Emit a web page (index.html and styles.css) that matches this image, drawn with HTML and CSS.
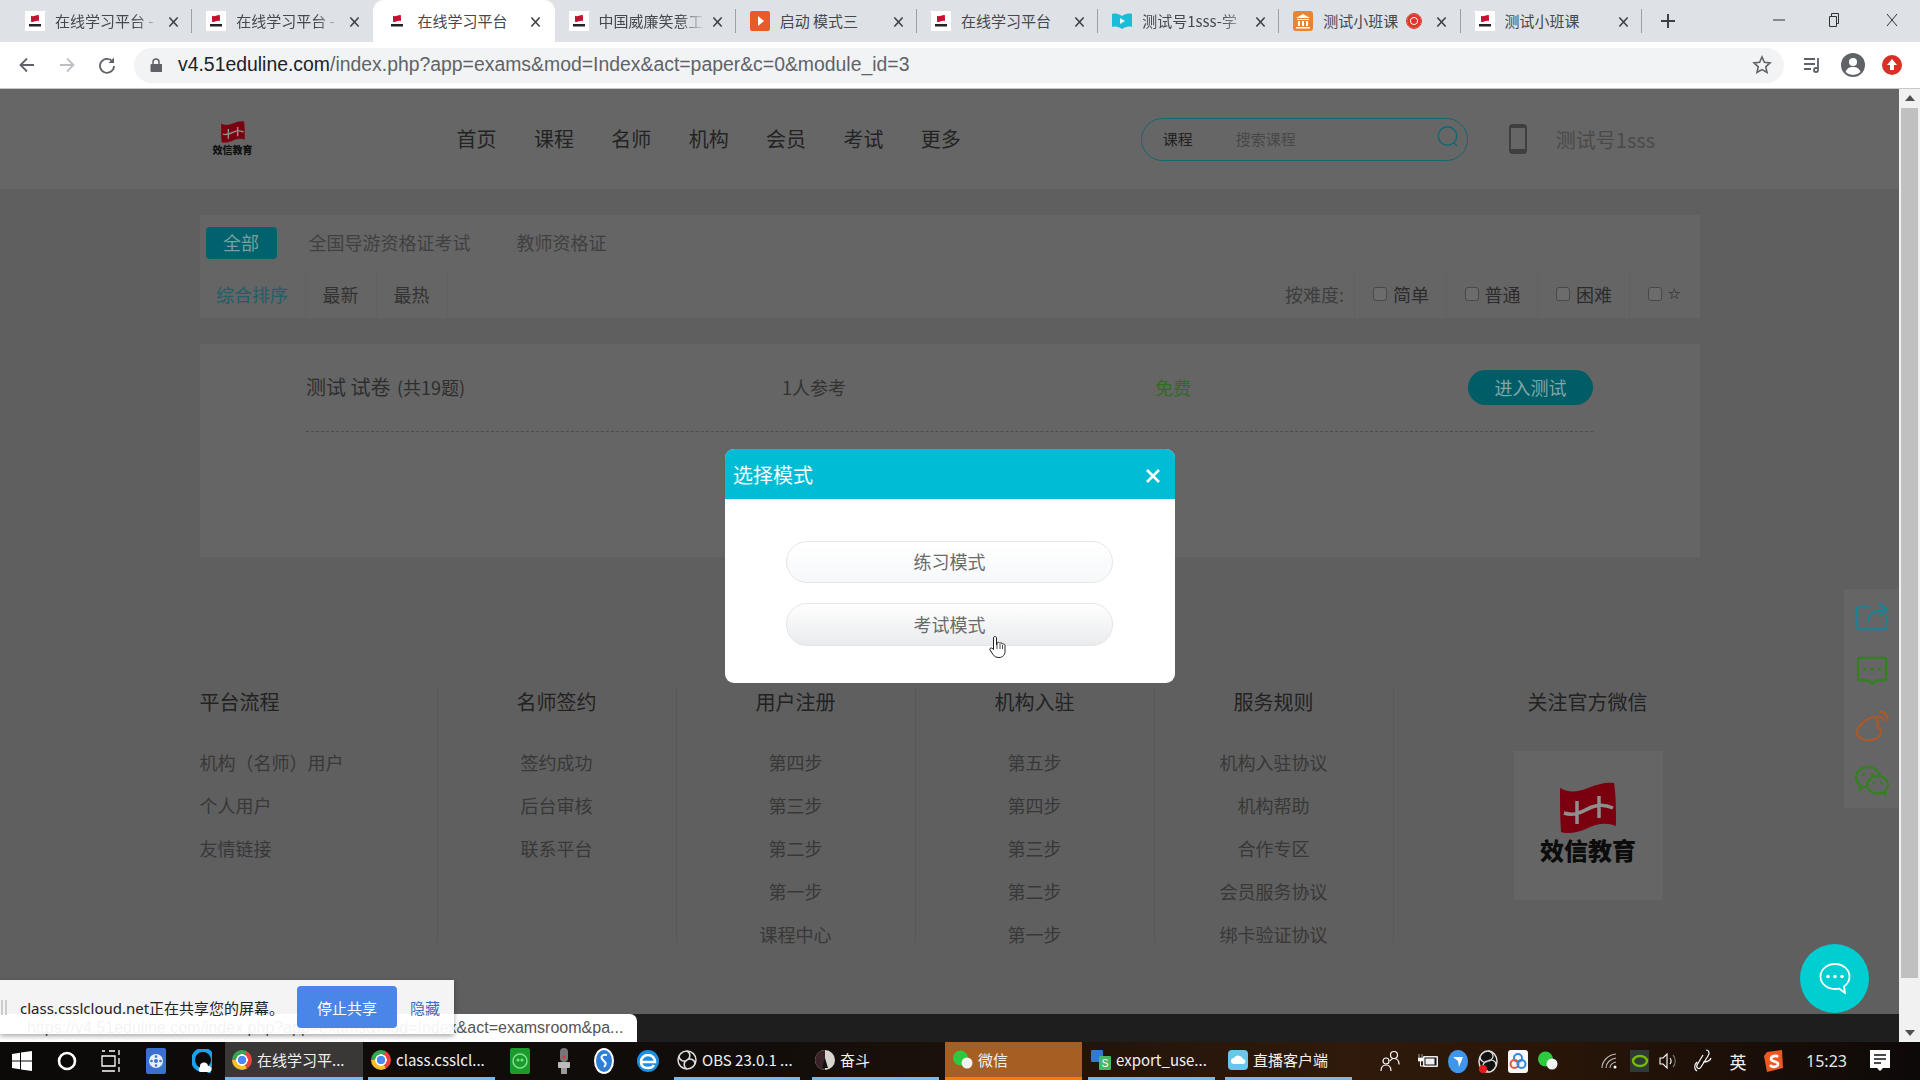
FILE: index.html
```html
<!DOCTYPE html>
<html lang="zh">
<head>
<meta charset="utf-8">
<title>在线学习平台</title>
<link rel="stylesheet" href="styles.css">
</head>
<body>
<svg class="defs" width="0" height="0">
  <defs>
    <symbol id="flag" viewBox="0 0 56 52"><path fill="#7a0010" d="M0 6C8 11 18 10 28 6S46 0 54 1C56 12 56 30 56 44 46 40 36 42 28 46 18 51 7 52 1 50 0 36 0 20 0 6Z"/><path fill="none" stroke="#8f8f8f" stroke-width="3.500" d="M4 31C16 35 24 28 32 25S46 23 53 26M17 19V42M39 14V36"/></symbol>
    <symbol id="flagb" viewBox="0 0 56 52"><path fill="#c8102e" d="M0 6C8 11 18 10 28 6S46 0 54 1C56 12 56 30 56 44 46 40 36 42 28 46 18 51 7 52 1 50 0 36 0 20 0 6Z"/></symbol>
    <symbol id="x" viewBox="0 0 12 12"><path fill="none" stroke="#3c4043" stroke-width="1.700" d="M1.500 1 10.500 11M10.500 1 1.500 11"/></symbol>
    <symbol id="mini" viewBox="0 0 20 20"><rect width="20" height="20" fill="#fff"/><use href="#flagb" x="6" y="3" width="8" height="9"/><rect x="4" y="13" width="12" height="2.500" fill="#222"/></symbol>
  </defs>
</svg>

<div class="tabs">
  <div class="tab sep"><svg class="fav2"><use href="#mini"/></svg><span class="tt fade">在线学习平台 -</span><svg class="tx"><use href="#x"/></svg></div>
  <div class="tab"><svg class="fav2"><use href="#mini"/></svg><span class="tt fade">在线学习平台 -</span><svg class="tx"><use href="#x"/></svg></div>
  <div class="tab active"><svg class="fav2"><use href="#mini"/></svg><span class="tt">在线学习平台</span><svg class="tx"><use href="#x"/></svg></div>
  <div class="tab sep"><svg class="fav2"><use href="#mini"/></svg><span class="tt fade">中国威廉笑意工</span><svg class="tx"><use href="#x"/></svg></div>
  <div class="tab sep"><svg class="fav2" viewBox="0 0 20 20"><rect width="20" height="20" rx="2" fill="#ea5a28"/><path d="M8 5l6 5-6 5z" fill="#fff"/></svg><span class="tt">启动 模式三</span><svg class="tx"><use href="#x"/></svg></div>
  <div class="tab sep"><svg class="fav2"><use href="#mini"/></svg><span class="tt">在线学习平台</span><svg class="tx"><use href="#x"/></svg></div>
  <div class="tab sep"><svg class="fav2" viewBox="0 0 20 20"><path d="M0 3c4-1 7 0 10 2 3-2 6-3 10-2v13c-4-1-7 0-10 2-3-2-6-3-10-2z" fill="#19bdd8"/><path d="M8 7l5 3-5 3z" fill="#e8f8fb"/></svg><span class="tt fade">测试号1sss-学</span><svg class="tx"><use href="#x"/></svg></div>
  <div class="tab sep"><svg class="fav2" viewBox="0 0 20 20"><rect width="20" height="20" rx="3" fill="#ea8430"/><path d="M10 3l7 4H3zM4 8h12v1H4zM5 10h2v5H5zM9 10h2v5H9zM13 10h2v5h-2zM3 16h14v1.500H3z" fill="#fff"/></svg><span class="tt short">测试小班课</span><span class="rec"></span><svg class="tx"><use href="#x"/></svg></div>
  <div class="tab sep"><svg class="fav2"><use href="#mini"/></svg><span class="tt">测试小班课</span><svg class="tx"><use href="#x"/></svg></div>
  <svg class="plus" viewBox="0 0 14 14"><path d="M7 0v14M0 7h14" stroke="#3c4043" stroke-width="2"/></svg>
  <div class="winctl">
    <svg viewBox="0 0 12 12"><path d="M0 6h12" stroke="#333" stroke-width="1"/></svg>
    <svg viewBox="0 0 12 14"><path d="M1.500 3.500h7v10h-7zM3.500 3.500v-3h7v10h-2" fill="none" stroke="#333" stroke-width="1"/></svg>
    <svg viewBox="0 0 12 12"><path d="M1 0l10 12M11 0 1 12" stroke="#333" stroke-width="1" fill="none"/></svg>
  </div>
</div>

<div class="toolbar">
  <svg class="tbi" viewBox="0 0 20 20"><path d="M17 10H4M10 3.500 3.500 10l6.500 6.500" fill="none" stroke="#5f6368" stroke-width="1.800"/></svg>
  <svg class="tbi" viewBox="0 0 20 20"><path d="M3 10h13M10 3.500l6.500 6.500L10 16.500" fill="none" stroke="#bcc0c4" stroke-width="1.800"/></svg>
  <svg class="tbi" viewBox="0 0 20 20"><path d="M15.500 6.500A7 7 0 1 0 17 11" fill="none" stroke="#5f6368" stroke-width="1.800"/><path d="M17 2.500V8h-5.500z" fill="#5f6368"/></svg>
  <div class="omni">
    <svg class="lock" viewBox="0 0 12 14"><path d="M3 6V4a3 3 0 0 1 6 0v2" fill="none" stroke="#5f6368" stroke-width="1.500"/><rect y="6" width="12" height="8" x="0.500" rx="1" fill="#5f6368"/></svg>
    <span class="url"><b>v4.51eduline.com</b>/index.php?app=exams&amp;mod=Index&amp;act=paper&amp;c=0&amp;module_id=3</span>
    <svg class="star" viewBox="0 0 20 20"><path d="M10 2l2.400 5.300 5.600.6-4.200 3.900 1.200 5.700-5-2.900-5 2.900 1.200-5.700L2 7.900l5.600-.6z" fill="none" stroke="#5f6368" stroke-width="1.600"/></svg>
  </div>
  <div class="exts">
    <svg class="e1" viewBox="0 0 20 20"><path d="M2 4h11M2 9h11M2 14h7M16 3v12a2 2 0 1 1-2-2h2" fill="none" stroke="#5f6368" stroke-width="1.800"/></svg>
    <svg class="e2" viewBox="0 0 24 24"><circle cx="12" cy="12" r="12" fill="#5f6368"/><circle cx="12" cy="9" r="4" fill="#fff"/><path d="M4.500 19c1.500-4 4-5 7.500-5s6 1 7.500 5a11 11 0 0 1-15 0z" fill="#fff"/></svg>
    <svg class="e3" viewBox="0 0 20 20"><circle cx="10" cy="10" r="10" fill="#d93025"/><path d="M10 4l5 6h-3v5H8v-5H5z" fill="#fff"/></svg>
  </div>
</div>

<div class="main">
  <div class="page">
    <header class="head">
      <div class="wrap headrow">
        <div class="logo"><svg width="24" height="22"><use href="#flag"/></svg><span>效信教育</span></div>
        <nav class="nav"><a>首页</a><a>课程</a><a>名师</a><a>机构</a><a>会员</a><a>考试</a><a>更多</a></nav>
        <div class="search"><span class="s1">课程</span><span class="s2">搜索课程</span>
          <svg class="sicon" viewBox="0 0 22 22"><circle cx="10.500" cy="10" r="9.300" fill="none" stroke="#0f6972" stroke-width="1.400"/><path d="M17 17l3 3" stroke="#0f6972" stroke-width="1.400"/></svg></div>
        <svg class="phone" viewBox="0 0 18 30"><rect x="1" y="1" width="16" height="28" rx="3" fill="none" stroke="#3f3f3f" stroke-width="2"/><rect x="1" y="25" width="16" height="4" fill="#3f3f3f"/><rect x="1" y="1" width="16" height="3" fill="#3f3f3f"/></svg>
        <span class="user">测试号1sss</span>
      </div>
    </header>

    <section class="wrap filter">
      <div class="cats"><span class="cat on">全部</span><span class="cat wide">全国导游资格证考试</span><span class="cat">教师资格证</span></div>
      <div class="sorts">
        <span class="sort w1 cur">综合排序</span><span class="sort w2">最新</span><span class="sort w2">最热</span>
        <span class="difflabel">按难度:</span>
        <label class="diff"><i class="chk"></i>简单</label>
        <label class="diff"><i class="chk"></i>普通</label>
        <label class="diff"><i class="chk"></i>困难</label>
        <label class="diff last"><i class="chk"></i><em>☆</em></label>
      </div>
    </section>

    <section class="wrap paper">
      <div class="prow">
        <div class="ptitle">测试 试卷 <small>(共19题)</small></div>
        <div class="pcount">1人参考</div>
        <div class="pfree">免费</div>
        <a class="enter">进入测试</a>
      </div>
    </section>

    <footer class="wrap foot">
      <div class="fcol first"><h4>平台流程</h4><a>机构（名师）用户</a><a>个人用户</a><a>友情链接</a></div>
      <div class="fcol"><h4>名师签约</h4><a>签约成功</a><a>后台审核</a><a>联系平台</a></div>
      <div class="fcol"><h4>用户注册</h4><a>第四步</a><a>第三步</a><a>第二步</a><a>第一步</a><a>课程中心</a></div>
      <div class="fcol"><h4>机构入驻</h4><a>第五步</a><a>第四步</a><a>第三步</a><a>第二步</a><a>第一步</a></div>
      <div class="fcol"><h4>服务规则</h4><a>机构入驻协议</a><a>机构帮助</a><a>合作专区</a><a>会员服务协议</a><a>绑卡验证协议</a></div>
      <div class="fwx"><h4>关注官方微信</h4><div class="qr"><svg width="56" height="52"><use href="#flag"/></svg><strong>效信教育</strong></div></div>
    </footer>
    <div class="strip"></div>
  </div>
  <div class="scroll"><span class="up"></span><span class="thumb"></span><span class="down"></span></div>

  <aside class="side">
    <svg viewBox="0 0 34 30"><path d="M15 6H5a3 3 0 0 0-3 3v16a3 3 0 0 0 3 3h24a3 3 0 0 0 3-3V15" fill="none" stroke="#1f8092" stroke-width="2.400"/><path d="M13 21c0-8 6-12 17-12M24 2l8 7-8 6" fill="none" stroke="#1f8092" stroke-width="2.400"/></svg>
    <svg viewBox="0 0 34 32"><path d="M4 2h26a2 2 0 0 1 2 2v20a2 2 0 0 1-2 2h-9l-4 4-4-4H4a2 2 0 0 1-2-2V4a2 2 0 0 1 2-2z" fill="none" stroke="#33801e" stroke-width="2.400"/><circle cx="9" cy="14" r="1.800" fill="#33801e"/><circle cx="17" cy="14" r="1.800" fill="#33801e"/><circle cx="25" cy="14" r="1.800" fill="#33801e"/></svg>
    <svg viewBox="0 0 38 34"><path d="M26 14c-3-5-1-8-4-7-9 1-19 9-20 17-1 6 7 9 14 9 7 0 13-4 13-9 0-4-3-5-4-5l1-5z" fill="none" stroke="#ab582b" stroke-width="2.400"/><path d="M26 7c4-1 6 1 7 5M27 1c6-1 10 4 10 10" fill="none" stroke="#ab582b" stroke-width="2.400"/></svg>
    <svg viewBox="0 0 36 32"><path d="M14 1C7 1 1 6 1 12c0 4 2 7 5 9l-1 4 5-3h2" fill="none" stroke="#33801e" stroke-width="2.400"/><path d="M27 11c-2-6-7-10-13-10" fill="none" stroke="#33801e" stroke-width="2.400"/><ellipse cx="24" cy="20" rx="11" ry="9.500" fill="none" stroke="#33801e" stroke-width="2.400"/><path d="M29 28l3 3v-5" fill="none" stroke="#33801e" stroke-width="2.400"/><circle cx="9" cy="9" r="1.500" fill="#33801e"/><circle cx="18" cy="9" r="1.500" fill="#33801e"/><circle cx="20" cy="18" r="1.500" fill="#33801e"/><circle cx="28" cy="18" r="1.500" fill="#33801e"/></svg>
  </aside>

  <div class="chat"><svg viewBox="0 0 32 32"><path d="M16 2C8 2 1.500 7.500 1.500 14.500S8 27 16 27c1.500 0 3-.2 4-.5l6 4.500-1-6.500c3.500-2.500 5.500-6 5.500-10C30.500 7.500 24 2 16 2z" fill="none" stroke="#fff" stroke-width="1.800"/><circle cx="9" cy="14.500" r="1.800" fill="#fff"/><circle cx="16" cy="14.500" r="1.800" fill="#fff"/><circle cx="23" cy="14.500" r="1.800" fill="#fff"/></svg></div>

  <div class="modal">
    <div class="mhead"><span>选择模式</span><svg viewBox="0 0 14 14"><path d="M1 1l12 12M13 1 1 13" stroke="#fff" stroke-width="2.600"/></svg></div>
    <div class="mbody"><button class="mbtn">练习模式</button><button class="mbtn hover">考试模式</button></div>
    <svg class="hand" viewBox="0 0 18 24"><path d="M6 1.500c1 0 1.500.7 1.500 1.500v7l.5-.2V8c1-1 2.500-.8 2.800.3 1-.8 2.400-.4 2.700.7 1-.4 2.500 0 2.500 1.500v6c0 3-2 6-6 6-3 0-4.500-1-6-3L1 15c-.8-1.200.7-2.800 2-1.800l1.500 1.300V3c0-.8.500-1.500 1.500-1.500z" fill="#fff" stroke="#222" stroke-width="1"/><path d="M8 10v4M11 9v5M13.500 10v4" stroke="#222" stroke-width=".8"/></svg>
  </div>

  <div class="bubble"><span>https://v4.51eduline.com/index.php?app=exams&amp;mod=Index&amp;act=examsroom&amp;pa...</span></div>
  <div class="share">
    <i class="grip"></i>
    <span class="stxt">class.csslcloud.net正在共享您的屏幕。</span>
    <button class="stop">停止共享</button>
    <a class="hide">隐藏</a>
  </div>
</div>

<div class="taskbar">
  <span class="sl w44"><svg width="20" height="20" viewBox="0 0 20 20"><path fill="#fff" d="M0 3l8-1.200V9.500H0zM9 1.600 20 0v9.500H9zM0 10.500h8v7.700L0 17zM9 10.500h11V20L9 18.400z"/></svg></span>
  <span class="sl w45"><svg width="20" height="20" viewBox="0 0 20 20"><circle cx="10" cy="10" r="8" fill="none" stroke="#fff" stroke-width="2.600"/></svg></span>
  <span class="sl w44"><svg width="21" height="24" viewBox="0 0 21 24"><path fill="none" stroke="#fff" stroke-width="1.300" d="M1 2h3M8 2h6M1 22h13M1 7h13v10H1zM18 1v5M18 9v6M18 18v5"/></svg></span>
  <span class="sl w45"><svg width="20" height="26" viewBox="0 0 20 26"><rect width="20" height="26" rx="2" fill="#3b6fd0"/><circle cx="10" cy="13" r="7" fill="#e8eefc"/><circle cx="10" cy="13" r="2" fill="#3b6fd0"/><circle cx="10" cy="8.500" r="1.300" fill="#3b6fd0"/><circle cx="10" cy="17.500" r="1.300" fill="#3b6fd0"/><circle cx="5.500" cy="13" r="1.300" fill="#3b6fd0"/><circle cx="14.500" cy="13" r="1.300" fill="#3b6fd0"/></svg></span>
  <span class="sl w47"><svg width="20" height="24" viewBox="0 0 20 24"><path d="M10 1a9 10 0 1 0 4 19l3 2 1-4a10 10 0 0 0-8-17z" fill="none" stroke="#19a3ee" stroke-width="4"/><path d="M8 18a4 4 0 0 1 8-1 3 3 0 0 1 1 6H8a3 3 0 0 1 0-5z" fill="#fff"/></svg></span>
  <span class="task t138 act"><i class="chrome"></i><span>在线学习平...</span></span>
  <span class="task t127 ml5"><i class="chrome"></i><span>class.csslcl...</span></span>
  <span class="sl w50"><svg width="20" height="26" viewBox="0 0 20 26"><rect width="20" height="26" rx="2" fill="#1a9b2c"/><circle cx="10" cy="13" r="7" fill="none" stroke="#7fe08c" stroke-width="1.500"/><circle cx="8" cy="12" r="1.500" fill="#7fe08c"/><circle cx="12" cy="12" r="1.500" fill="#7fe08c"/></svg></span>
  <span class="sl w37"><svg width="12" height="26" viewBox="0 0 12 26"><rect x="2" width="8" height="14" rx="4" fill="#777"/><circle cx="6" cy="9" r="1.500" fill="#d33"/><rect y="14" width="12" height="6" rx="1" fill="#bbb"/><rect x="3" y="20" width="6" height="6" fill="#999"/></svg></span>
  <span class="sl w43"><svg width="20" height="26" viewBox="0 0 20 26"><ellipse cx="10" cy="13" rx="10" ry="13" fill="#fff"/><ellipse cx="10" cy="13" rx="8" ry="11" fill="#2f7fd8"/><path d="M13 7c-5-1-7 2-4 5s4 4 1 7" fill="none" stroke="#fff" stroke-width="2"/></svg></span>
  <span class="sl w45"><svg width="22" height="24" viewBox="0 0 22 24"><circle cx="11" cy="12" r="11" fill="#1c8fe0"/><path d="M4 13h14c0-4-3-7-7-7s-7 3-7 7c0 4 3 6 7 6 3 0 5-1 6-3" fill="none" stroke="#fff" stroke-width="2.500"/></svg></span>
  <span class="gap4"></span>
  <span class="task t126"><svg class="ti" viewBox="0 0 20 20"><circle cx="10" cy="10" r="9" fill="none" stroke="#ddd" stroke-width="1.500"/><path d="M10 1a5 5 0 0 1 0 9 5 5 0 0 0 0 9M2 6a5 5 0 0 0 8 4 5 5 0 0 1 8 4" fill="none" stroke="#ddd" stroke-width="1.500"/></svg><span>OBS 23.0.1 ...</span></span>
  <span class="task t127 ml12"><svg class="ti" viewBox="0 0 20 20"><circle cx="10" cy="10" r="10" fill="#d8d4cf"/><path d="M10 0a10 10 0 0 0 0 20V0z" fill="#3a2228"/><path d="M10 8l-3 10h6z" fill="#111"/></svg><span>奋斗</span></span>
  <span class="task t137 ml6 wx"><svg class="ti" viewBox="0 0 20 20"><circle cx="7.500" cy="8" r="7.500" fill="#2dc93f"/><circle cx="14" cy="13" r="5.500" fill="#f2f2f2"/></svg><span>微信</span></span>
  <span class="task t127 ml6"><svg class="ti" viewBox="0 0 20 20"><rect width="12" height="12" rx="1" fill="#2b7cd3"/><rect x="8" y="6" width="12" height="14" rx="1" fill="#47b865"/><text x="14" y="17" font-size="10" fill="#fff" text-anchor="middle" font-family="Liberation Sans">S</text></svg><span>export_use...</span></span>
  <span class="task t127 ml10"><svg class="ti" viewBox="0 0 20 20"><rect width="20" height="20" rx="4" fill="#69c6ea"/><path d="M6 14a3 3 0 0 1 0-6 5 5 0 0 1 9 1 2.500 2.500 0 0 1 0 5z" fill="#fff"/></svg><span>直播客户端</span></span>
  <div class="tray">
    <span class="sl w30"><svg width="20" height="22" viewBox="0 0 20 22"><g fill="none" stroke="#fff" stroke-width="1.200"><circle cx="6" cy="11" r="3"/><path d="M1 21c0-4 2-6 5-6s5 2 5 6"/><circle cx="14" cy="5" r="3.500"/><path d="M10 11c1-2 3-2.500 4-2.500 3 0 5 2 5 6"/></g></svg></span>
    <span class="sl w30 ml8"><svg width="20" height="14" viewBox="0 0 20 14"><path d="M1 0v4M4 0v4M0 4h5v3H0z" stroke="#fff" fill="#fff" stroke-width=".6"/><path d="M2.500 7v5H5" stroke="#fff" fill="none"/><rect x="5" y="2" width="15" height="11" rx="1" fill="#eee"/><rect x="6.500" y="3.500" width="12" height="8" fill="#111"/><rect x="7.500" y="4.500" width="9" height="6" fill="#eee"/></svg></span>
    <span class="sl w30"><svg width="20" height="23" viewBox="0 0 20 23"><ellipse cx="10" cy="11.500" rx="10" ry="11.500" fill="#3f97ec"/><path d="M5 7l10 0-4 10-1-6z" fill="#fff"/></svg></span>
    <span class="sl w30"><svg width="20" height="23" viewBox="0 0 20 23"><ellipse cx="10" cy="11.500" rx="9" ry="10.500" fill="#111" stroke="#ddd" stroke-width="1.500"/><path d="M10 1a5 5 0 0 1 0 10 5 5 0 0 0 0 10M2 7a5 5 0 0 0 8 4 5 5 0 0 1 8 4" fill="none" stroke="#ddd" stroke-width="1.300"/><circle cx="5" cy="19" r="4" fill="#e81b1b"/></svg></span>
    <span class="sl w30"><svg width="20" height="23" viewBox="0 0 20 23"><rect width="20" height="23" rx="3" fill="#f7f7f7"/><circle cx="10" cy="8" r="4" fill="none" stroke="#2f88e0" stroke-width="2"/><circle cx="6.500" cy="14" r="4" fill="none" stroke="#e8553f" stroke-width="2"/><circle cx="13.500" cy="14" r="4" fill="none" stroke="#2f88e0" stroke-width="2"/></svg></span>
    <span class="sl w30"><svg width="20" height="20" viewBox="0 0 20 20"><circle cx="7.500" cy="8" r="7.500" fill="#2dc93f"/><circle cx="14" cy="13" r="5.500" fill="#f2f2f2"/></svg></span>
    <span class="sl w30 ml31"><svg width="16" height="16" viewBox="0 0 16 16"><path d="M1 15c0-7 6-13 14-14M5 15c0-5 4-9 10-10M9 15c0-3 2-5 6-6" fill="none" stroke="#bbb" stroke-width="1.100"/><circle cx="14" cy="14" r="1.500" fill="#fff"/></svg></span>
    <span class="sl w30"><svg width="19" height="22" viewBox="0 0 19 22"><rect width="19" height="22" fill="#2e3a35"/><ellipse cx="10" cy="11" rx="7" ry="5" fill="none" stroke="#76b900" stroke-width="2.500"/></svg></span>
    <span class="sl w30"><svg width="20" height="18" viewBox="0 0 20 18"><path d="M1 6h3l4-4v14l-4-4H1z" fill="none" stroke="#fff" stroke-width="1.100"/><path d="M11 6c1.500 2 1.500 4 0 6" fill="none" stroke="#fff" stroke-width="1.100"/><path d="M14 3c3 3 3 9 0 12" fill="none" stroke="#777" stroke-width="1.100"/></svg></span>
    <span class="sl w30 ml4"><svg width="18" height="24" viewBox="0 0 18 24"><path d="M12 1c3 0 4 3 2 6l-7 11c-2 3-5 1-4-2l6-10M3 13c-3 3-3 7 0 9M9 13c4 0 7-1 8-4" fill="none" stroke="#fff" stroke-width="1.200"/></svg></span>
    <span class="sl w30 ml5 en">英</span>
    <span class="sl w30 ml5"><svg width="19" height="22" viewBox="0 0 19 22"><path d="M3 2l15-2 1 18-16 4-3-16z" fill="#ea5a22"/><path d="M14 7c-2-2-7-1-7 2s7 2 7 5-6 4-8 1" fill="none" stroke="#fff" stroke-width="2.600"/></svg></span>
    <span class="clock">15:23</span>
    <span class="sl w30"><svg width="20" height="22" viewBox="0 0 20 22"><path d="M0 0h20v18h-7l-3 3-3-3H0z" fill="#fff"/><path d="M4 5h12M4 9h12M4 13h7" stroke="#111" stroke-width="1.400"/></svg></span>
    <span class="trayend"></span>
  </div>
</div>
</body>
</html>
```
FILE: styles.css
```css
* { box-sizing: border-box; margin: 0; padding: 0; }
html, body { width: 1920px; height: 1080px; overflow: hidden; }
body { font-family: "Noto Sans CJK SC", "Noto Sans", sans-serif; display: flex; flex-direction: column; background: #fff; }
.defs { position: absolute; }
a { text-decoration: none; }
button { font-family: inherit; border: 0; }

/* Tab strip */
.tabs { height: 42px; background: #dee1e6; display: flex; padding-left: 11px; align-items: stretch; flex: none; }
.tab { width: 181.200px; padding-left: 14px; display: flex; align-items: center; position: relative; font-size: 15px; color: #45484c; flex: none; }
.tab.active { background: #fff; border-radius: 11px 11px 0 0; }
.tab.sep::after { content: ""; position: absolute; right: 0; top: 9px; height: 24px; width: 1px; background: #9ba0a6; }
.fav2 { width: 20px; height: 20px; flex: none; }
.tt { margin-left: 10px; width: 107px; overflow: hidden; white-space: nowrap; flex: none; line-height: 20px; }
.tt.short { width: 81px; }
.fade { -webkit-mask-image: linear-gradient(90deg, #000 75%, transparent); mask-image: linear-gradient(90deg, #000 75%, transparent); }
.tx { width: 11px; height: 12px; flex: none; position: absolute; left: 157px; top: 16px; }
.rec { width: 14px; height: 14px; border-radius: 50%; background: #e0352b; border: 3px solid #e0352b; box-shadow: inset 0 0 0 1px #fff; flex: none; outline: 1px solid #e0352b; margin-left: 3px; }
.plus { width: 14px; height: 14px; align-self: center; margin-left: 19px; flex: none; }
.winctl { margin-left: auto; display: flex; align-items: flex-start; padding-top: 13px; gap: 43px; padding-right: 22px; }
.winctl svg { width: 12px; height: 14px; }
.winctl svg:last-child { margin-left: 3px; }

/* Toolbar */
.toolbar { height: 47px; background: #fff; border-bottom: 1px solid #c8c8c8; display: flex; align-items: center; padding-left: 17px; flex: none; }
.tbi { width: 20px; height: 20px; margin-right: 20px; flex: none; }
.omni { width: 1650px; height: 35px; margin-left: -3px; background: #f1f3f4; border-radius: 18px; display: flex; align-items: center; padding-left: 16px; flex: none; }
.lock { width: 12px; height: 14px; flex: none; }
.url { margin-left: 16px; font-family: "Liberation Sans", sans-serif; font-size: 19.400px; color: #5f6368; white-space: nowrap; margin-top: -1px; }
.url b { font-weight: 400; color: #202124; }
.star { width: 20px; height: 20px; margin-left: auto; margin-right: 12px; }
.exts { display: flex; align-items: center; flex: none; }
.e1 { width: 20px; height: 20px; margin-left: 18px; }
.e2 { width: 24px; height: 24px; margin-left: 19px; }
.e3 { width: 20px; height: 20px; margin-left: 17px; }

/* Page */
.main { height: 953px; display: flex; position: relative; flex: none; overflow: hidden; }
.page { width: 1899px; height: 953px; background: #5f5f5f; display: flex; flex-direction: column; flex: none; color: #333; }
.wrap { width: 1500px; margin-left: auto; margin-right: auto; }
.head { height: 100px; background: #666; flex: none; }
.headrow { display: flex; align-items: center; height: 100px; }
.logo { width: 42px; margin-left: 12px; display: flex; flex-direction: column; align-items: center; margin-top: -2px; }
.logo span { font-size: 10px; font-weight: 900; color: #111; line-height: 13px; white-space: nowrap; }
.nav { display: flex; gap: 37.400px; margin-left: 203px; font-size: 20px; color: #232323; margin-top: -1px; }
.search { width: 327px; height: 43px; margin-left: 180px; border: 1px solid #0f6972; border-radius: 22px; display: flex; align-items: center; padding-left: 21px; font-size: 15px; position: relative; }
.s1 { color: #222; margin-top: -1px; }
.s2 { color: #484848; margin-left: 43px; margin-top: -1px; }
.sicon { width: 22px; height: 22px; margin-left: auto; margin-right: 8px; margin-top: -4px; }
.phone { width: 18px; height: 30px; margin-left: 41px; flex: none; }
.user { margin-left: 29px; font-size: 20px; color: #4a4a4a; white-space: nowrap; }

.filter { margin-top: 26px; height: 103px; background: #656565; flex: none; }
.cats { display: flex; padding: 12px 0 0 6px; height: 56px; font-size: 18px; color: #404040; }
.cat { height: 32px; line-height: 31px; margin-right: 32px; white-space: nowrap; }
.cat.wide { margin-right: 46px; }
.cat.on { width: 71px; text-align: center; background: #00626c; color: #7a9ea2; border-radius: 4px; }
.sorts { display: flex; height: 47px; align-items: center; font-size: 18px; color: #333; }
.sort { height: 47px; line-height: 46px; text-align: center; border-right: 1px solid #616161; }
.w1 { width: 106px; }
.w2 { width: 71px; }
.cur { color: #1f5f68; }
.difflabel { margin-left: auto; margin-right: 10px; color: #3d3d3d; margin-top: -2px; }
.diff { width: 91.500px; height: 47px; border-left: 1px solid #616161; display: flex; align-items: center; padding-left: 18px; padding-bottom: 2px; color: #2c2c2c; }
.diff.last { width: 71px; }
.diff em { font-style: normal; font-family: "DejaVu Sans", sans-serif; font-size: 15px; color: #222; }
.chk { width: 14px; height: 14px; border: 1px solid #484848; background: #6c6c6c; border-radius: 3px; margin-right: 6px; flex: none; }

.paper { margin-top: 26px; height: 213px; background: #656565; padding: 0 107px 0 106.500px; flex: none; }
.prow { display: grid; grid-template-columns: 476px 373px 313px 125px; height: 88px; align-items: center; border-bottom: 1px dashed #4d4d4d; font-size: 18px; color: #333; }
.ptitle { font-size: 20px; color: #2e2e2e; white-space: nowrap; margin-bottom: 2px; }
.ptitle small { font-size: 18px; margin-left: 2px; }
.pcount, .pfree { margin-bottom: 2px; }
.pfree { color: #2e6e21; }
.enter { height: 35px; border-radius: 18px; background: #005c66; color: #82a6aa; text-align: center; line-height: 34px; }

.foot { margin-top: 131px; height: 255px; display: flex; flex: none; overflow: visible; }
.fcol { width: 239px; height: 255px; border-right: 1px solid #595959; display: flex; flex-direction: column; align-items: center; flex: none; font-size: 18px; color: #383838; }
.fcol.first { width: 238px; align-items: flex-start; }
.fcol h4, .fwx h4 { font-size: 20px; font-weight: 400; line-height: 28px; color: #222; margin-bottom: 25px; white-space: nowrap; }
.fcol a { height: 43px; line-height: 43px; white-space: nowrap; flex: none; }
.fwx { padding-left: 120px; display: flex; flex-direction: column; align-items: flex-start; }
.fwx h4 { margin-bottom: 35px; margin-left: 14px; }
.qr { width: 149px; height: 149px; background: #656565; display: flex; flex-direction: column; align-items: center; padding-top: 31px; }
.qr strong { font-size: 24px; font-weight: 900; line-height: 32px; color: #0c0c0c; }
.strip { margin-top: auto; height: 28px; background: #1e1e1e; flex: none; }

.scroll { width: 21px; height: 953px; background: #f1f1f1; display: flex; flex-direction: column; align-items: center; flex: none; }
.up { width: 0; height: 0; border: 5px solid transparent; border-top: 0; border-bottom: 6px solid #505050; margin-top: 6px; }
.thumb { width: 17px; height: 870px; background: #c0c0c0; margin-top: 7px; }
.down { width: 0; height: 0; border: 5px solid transparent; border-bottom: 0; border-top: 6px solid #505050; margin-top: auto; margin-bottom: 6px; }

/* Overlays */
.side { position: absolute; left: 1844px; top: 500px; width: 55px; height: 219px; background: #656565; display: flex; flex-direction: column; align-items: center; padding-top: 12px; gap: 25px; }
.side svg { width: 34px; height: 30px; flex: none; }
.chat { position: absolute; left: 1800px; top: 855px; width: 69px; height: 69px; border-radius: 50%; background: #00ced1; display: flex; align-items: center; justify-content: center; }
.chat svg { width: 32px; height: 32px; margin-top: -2px; }
.modal { position: absolute; left: 725px; top: 360px; width: 450px; height: 234px; background: #fff; border-radius: 9px; overflow: hidden; }
.mhead { height: 50px; background: #00bcd4; color: #fff; font-size: 20px; display: flex; align-items: center; padding-left: 8px; justify-content: space-between; padding-right: 15px; }
.mhead svg { width: 14px; height: 14px; margin-top: 4px; }
.mbody { display: flex; flex-direction: column; align-items: center; padding: 42px 1px 0 0; gap: 20px; }
.mbtn { width: 327px; height: 42px; border: 1px solid #e6e6e6; border-radius: 21px; background: linear-gradient(#fff, #f6f8fa); font-size: 18px; color: #6b6b6b; padding-bottom: 2px; }
.mbtn.hover { height: 43px; background: linear-gradient(#fff, #e9ebed); }
.hand { position: absolute; left: 264px; top: 186px; width: 18px; height: 24px; }
.bubble { position: absolute; left: 0; top: 925px; width: 637px; height: 28px; background: #fff; border-radius: 0 7px 0 0; font-family: "Liberation Sans", sans-serif; font-size: 16px; line-height: 28px; color: #555; white-space: nowrap; overflow: hidden; padding-left: 27px; }
.share { position: absolute; left: 0; top: 891px; width: 454px; height: 54px; background: rgba(255,255,255,.93); box-shadow: 0 2px 5px rgba(0,0,0,.35); display: flex; align-items: center; padding-left: 20px; }
.grip { position: absolute; left: 1px; top: 20px; width: 6px; height: 15px; border-left: 2px solid #ccc; border-right: 2px solid #ccc; }
.stxt { font-size: 15px; color: #222; white-space: nowrap; width: 277px; font-family: "Noto Sans", "Noto Sans CJK SC", sans-serif; flex: none; }
.stop { width: 100px; height: 42px; background: #4a86e8; color: #fff; font-size: 15px; border-radius: 4px; flex: none; }
.hide { font-size: 15px; margin-left: 13px; color: #3f6bc4; }

/* Taskbar */
.taskbar { height: 38px; flex: none; display: flex; align-items: stretch; background: linear-gradient(90deg, #0c0a09 0, #120d0a 40%, #2f1a0b 70%, #2a1608 80%, #0d0908 100%); color: #f2f2f2; font-size: 15px; }
.sl { display: flex; align-items: center; justify-content: center; flex: none; }
.w30 { width: 30px; }
.w37 { width: 37px; }
.w43 { width: 43px; }
.w44 { width: 44px; }
.w45 { width: 45px; }
.w47 { width: 47px; }
.w50 { width: 50px; }
.gap4 { width: 4px; flex: none; }
.ml4 { margin-left: 4px; }
.ml5 { margin-left: 5px; }
.ml6 { margin-left: 6px; }
.ml8 { margin-left: 8px; }
.ml10 { margin-left: 10px; }
.ml12 { margin-left: 12px; }
.ml31 { margin-left: 31px; }
.task { display: flex; align-items: center; gap: 5px; padding: 0 3px 0; border-bottom: 3px solid #76b9ed; flex: none; white-space: nowrap; overflow: hidden; }
.t126 { width: 126px; }
.t127 { width: 127px; }
.t137 { width: 137px; }
.t138 { width: 138px; }
.task.act { background: #3a3836; padding-left: 7px; }
.task.wx { background: #a65f23; border-color: #f57c00; padding-left: 8px; }
.chrome { width: 20px; height: 20px; border-radius: 50%; flex: none; background: radial-gradient(circle, #4a8af4 0 4px, #fff 4.500px 5.500px, transparent 6px), conic-gradient(from 30deg, #e8453c 0 120deg, #f6c02d 120deg 240deg, #34a853 240deg 360deg); }
.ti { width: 20px; height: 20px; flex: none; }
.tray { margin-left: auto; display: flex; align-items: stretch; flex: none; }
.en { font-size: 17px; }
.clock { width: 77px; text-align: center; line-height: 38px; font-size: 16px; color: #e6e6e6; font-family: "Noto Sans", sans-serif; flex: none; }
.trayend { width: 25px; flex: none; }
```
